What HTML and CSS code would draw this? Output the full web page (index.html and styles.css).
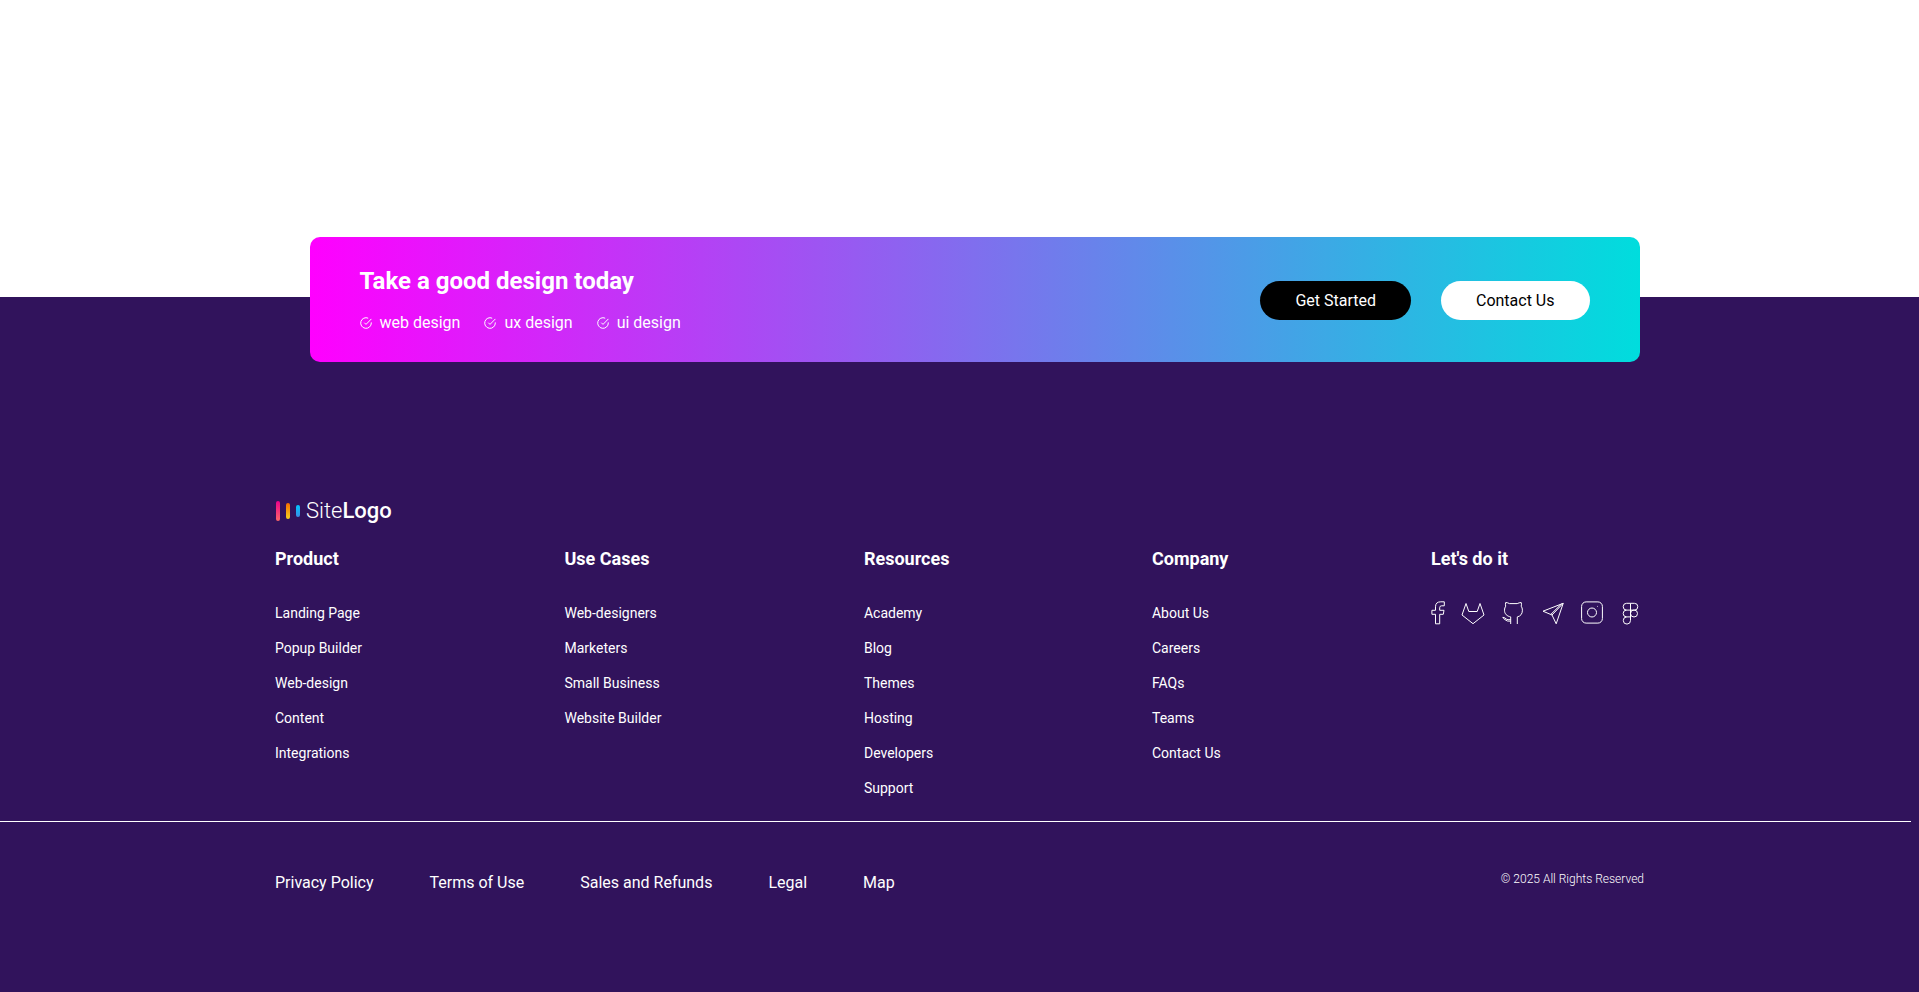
FILE: index.html
```html
<!DOCTYPE html>
<html lang="en">
<head>
<meta charset="utf-8">
<title>SiteLogo</title>
<link rel="stylesheet" href="styles.css">
</head>
<body>
<svg class="defs" aria-hidden="true">
  <symbol id="check" viewBox="0 0 12 12">
    <path d="M11.3 5.4V6A5.3 5.3 0 1 1 8.2 1.2M11.4 1.9 6 7.4 4.3 5.7"/>
  </symbol>
</svg>
<main class="page">
  <footer class="footer">
    <section class="cta">
      <div class="cta-copy">
        <h2 class="cta-title">Take a good design today</h2>
        <ul class="cta-list">
          <li class="cta-item"><svg class="check"><use href="#check"/></svg>web design</li>
          <li class="cta-item"><svg class="check"><use href="#check"/></svg>ux design</li>
          <li class="cta-item"><svg class="check"><use href="#check"/></svg>ui design</li>
        </ul>
      </div>
      <div class="cta-actions">
        <button class="btn btn-dark" type="button">Get Started</button>
        <button class="btn btn-light" type="button">Contact Us</button>
      </div>
    </section>

    <div class="container">
      <a class="logo" href="#">
        <svg class="logo-mark" viewBox="0 0 26 20" aria-hidden="true">
          <defs>
            <linearGradient id="pink" x2="0" y2="1"><stop stop-color="#ec008c"/><stop offset="1" stop-color="#fc6767"/></linearGradient>
            <linearGradient id="gold" x2="0" y2="1"><stop stop-color="#f46b00"/><stop offset="1" stop-color="#f5d020"/></linearGradient>
            <linearGradient id="blue" x2="0" y2="1"><stop stop-color="#00c6ff"/><stop offset="1" stop-color="#3a8ee6"/></linearGradient>
          </defs>
          <rect x="1" y="0" width="4" height="20" rx="2" fill="url(#pink)"/>
          <rect x="11" y="2" width="4" height="16" rx="2" fill="url(#gold)"/>
          <rect x="21" y="4" width="4" height="12" rx="2" fill="url(#blue)"/>
        </svg>
        <span class="logo-text">Site<b class="logo-strong">Logo</b></span>
      </a>

      <div class="columns">
        <nav class="column">
          <h3 class="column-title">Product</h3>
          <ul class="links">
            <li><a class="link" href="#">Landing Page</a></li>
            <li><a class="link" href="#">Popup Builder</a></li>
            <li><a class="link" href="#">Web-design</a></li>
            <li><a class="link" href="#">Content</a></li>
            <li><a class="link" href="#">Integrations</a></li>
          </ul>
        </nav>
        <nav class="column">
          <h3 class="column-title">Use Cases</h3>
          <ul class="links">
            <li><a class="link" href="#">Web-designers</a></li>
            <li><a class="link" href="#">Marketers</a></li>
            <li><a class="link" href="#">Small Business</a></li>
            <li><a class="link" href="#">Website Builder</a></li>
          </ul>
        </nav>
        <nav class="column">
          <h3 class="column-title">Resources</h3>
          <ul class="links">
            <li><a class="link" href="#">Academy</a></li>
            <li><a class="link" href="#">Blog</a></li>
            <li><a class="link" href="#">Themes</a></li>
            <li><a class="link" href="#">Hosting</a></li>
            <li><a class="link" href="#">Developers</a></li>
            <li><a class="link" href="#">Support</a></li>
          </ul>
        </nav>
        <nav class="column">
          <h3 class="column-title">Company</h3>
          <ul class="links">
            <li><a class="link" href="#">About Us</a></li>
            <li><a class="link" href="#">Careers</a></li>
            <li><a class="link" href="#">FAQs</a></li>
            <li><a class="link" href="#">Teams</a></li>
            <li><a class="link" href="#">Contact Us</a></li>
          </ul>
        </nav>
        <div class="column">
          <h3 class="column-title">Let's do it</h3>
          <div class="socials">
            <a href="#" aria-label="Facebook"><svg class="social" width="14" height="24" viewBox="0 0 14 24"><path d="M13.3 .8H9.8Q4.5 .8 4.5 5.8V9.3H.9V13.3H4.5V22.8H8.7V13.3H12.3L13 9.3H8.7V6.6Q8.7 4.8 10.6 4.8H13.3Z"/></svg></a>
            <a href="#" aria-label="GitLab"><svg class="social" width="24" height="24" viewBox="0 0 24 24"><path d="M5 2.5 1 14 12 22.7 23 14 19 2.5 16.2 10.5H7.8Z"/></svg></a>
            <a href="#" aria-label="GitHub"><svg class="social" width="24" height="24" viewBox="-1 0 24 24"><path d="M8.7 23V15.9C5 15.2 2.5 13 2.5 9.2Q2.5 6.8 3.7 5.2 3.2 3.2 3.7 1.5 5.8 1.6 7.4 2.6H15.2Q17.2 1.6 19.2 1.5 19.8 3.2 19.2 5.2 20.4 6.8 20.4 9.2C20.4 13 18.5 15.2 15.3 15.9V23M.8 16.3Q3 16.5 4.2 18 5.6 19.2 8.7 18.6M.8 16.3Q1.6 17.8 3 18.6 4.6 20.6 8.7 20.2"/></svg></a>
            <a href="#" aria-label="Telegram"><svg class="social" width="24" height="24" viewBox="-1 0 24 24"><path d="M21.2 2.3 1 10.2 10 14 14.2 22.8ZM21.2 2.3 10 14M19.6 2.8 8.8 13.4"/></svg></a>
            <a href="#" aria-label="Instagram"><svg class="social" width="22" height="24" viewBox="0 0 22 24"><rect x=".6" y=".9" width="20.8" height="21.2" rx="4.5"/><circle cx="11" cy="11.5" r="4.5"/><path d="M16.2 5.4h.6"/></svg></a>
            <a href="#" aria-label="Figma"><svg class="social" width="20" height="24" viewBox="-3 0 20 24"><path d="M8.5 2.3H4.6a3.4 3.4 0 0 0 0 6.8H12.4a3.4 3.4 0 0 0 0-6.8H8.5V19.4a3.6 3.6 0 1 1-3.8-3.5H8.5M4.6 9.1a3.4 3.4 0 0 0 0 6.8"/><circle cx="12" cy="12.5" r="3.5"/></svg></a>
          </div>
        </div>
      </div>
    </div>

    <hr class="rule">

    <div class="container legal">
      <nav class="legal-links">
        <a class="legal-link" href="#">Privacy Policy</a>
        <a class="legal-link" href="#">Terms of Use</a>
        <a class="legal-link" href="#">Sales and Refunds</a>
        <a class="legal-link" href="#">Legal</a>
        <a class="legal-link" href="#">Map</a>
      </nav>
      <p class="copyright">© 2025 All Rights Reserved</p>
    </div>
  </footer>
</main>
</body>
</html>
```

FILE: styles.css
```css
* {
  box-sizing: border-box;
}

body {
  margin: 0;
  background: #fff;
  color: #fff;
  font: 16px/20px Roboto, "Liberation Sans", sans-serif;
}

h2, h3, p, ul {
  margin: 0;
  padding: 0;
}

ul {
  list-style: none;
}

a {
  color: inherit;
  text-decoration: none;
}

.defs {
  display: none;
}

.page {
  display: flex;
  flex-direction: column;
  min-height: 100vh;
  padding-top: 297px;
}

.footer {
  flex: 1;
  background: #31135c;
}

.container {
  max-width: 1369px;
  margin: 0 auto;
}

.cta {
  display: flex;
  flex-wrap: wrap;
  gap: 20px;
  align-items: center;
  justify-content: space-between;
  max-width: 1330px;
  margin: -60px auto 0;
  padding: 29px 50px;
  border-radius: 10px;
  background: linear-gradient(90deg, #f0f, #00dddd);
  transform: translateX(15px);
}

.cta-title {
  font-size: 24px;
  line-height: 30px;
}

.cta-list {
  display: flex;
  gap: 24px;
  margin-top: 17px;
}

.cta-item {
  display: flex;
  align-items: center;
  gap: 8px;
}

.check {
  width: 12px;
  height: 12px;
  fill: none;
  stroke: #fff;
  stroke-width: 1;
}

.cta-actions {
  display: flex;
  gap: 30px;
  padding-top: 2px;
}

.btn {
  padding: 10px 35px;
  border: 0;
  border-radius: 20px;
  font: inherit;
  line-height: 19px;
}

.btn-dark {
  background: #000;
  color: #fff;
}

.btn-light {
  background: #fff;
  color: #000;
}

.logo {
  display: flex;
  align-items: center;
  gap: 5px;
  width: max-content;
  margin-top: 136px;
}

.logo-mark {
  width: 26px;
  height: 20px;
}

.logo-text {
  font-size: 22px;
  font-weight: 300;
  line-height: 26px;
}

.logo-strong {
  font-weight: 500;
}

.columns {
  display: flex;
  flex-wrap: wrap;
  gap: 20px;
  justify-content: space-between;
  margin-top: 24px;
  padding-right: 5px;
}

.column-title {
  font-size: 18px;
  line-height: 22px;
}

.links {
  display: grid;
  gap: 15px;
  margin-top: 33px;
}

.link {
  display: block;
  font-size: 14px;
  line-height: 20px;
}

.socials {
  display: flex;
  gap: 16px;
  margin-top: 31px;
}

.social {
  display: block;
  fill: none;
  stroke: #fff;
  stroke-width: 1;
  stroke-linejoin: round;
}

.rule {
  height: 1px;
  margin: 23px 8px 0 0;
  border: 0;
  background: #fff;
}

.legal {
  display: flex;
  flex-wrap: wrap;
  gap: 20px;
  justify-content: space-between;
  margin-top: 50px;
}

.legal-links {
  display: flex;
  flex-wrap: wrap;
  gap: 20px 56px;
  padding-top: 1px;
}

.copyright {
  font-size: 12px;
  font-weight: 300;
  line-height: 14px;
}
```
